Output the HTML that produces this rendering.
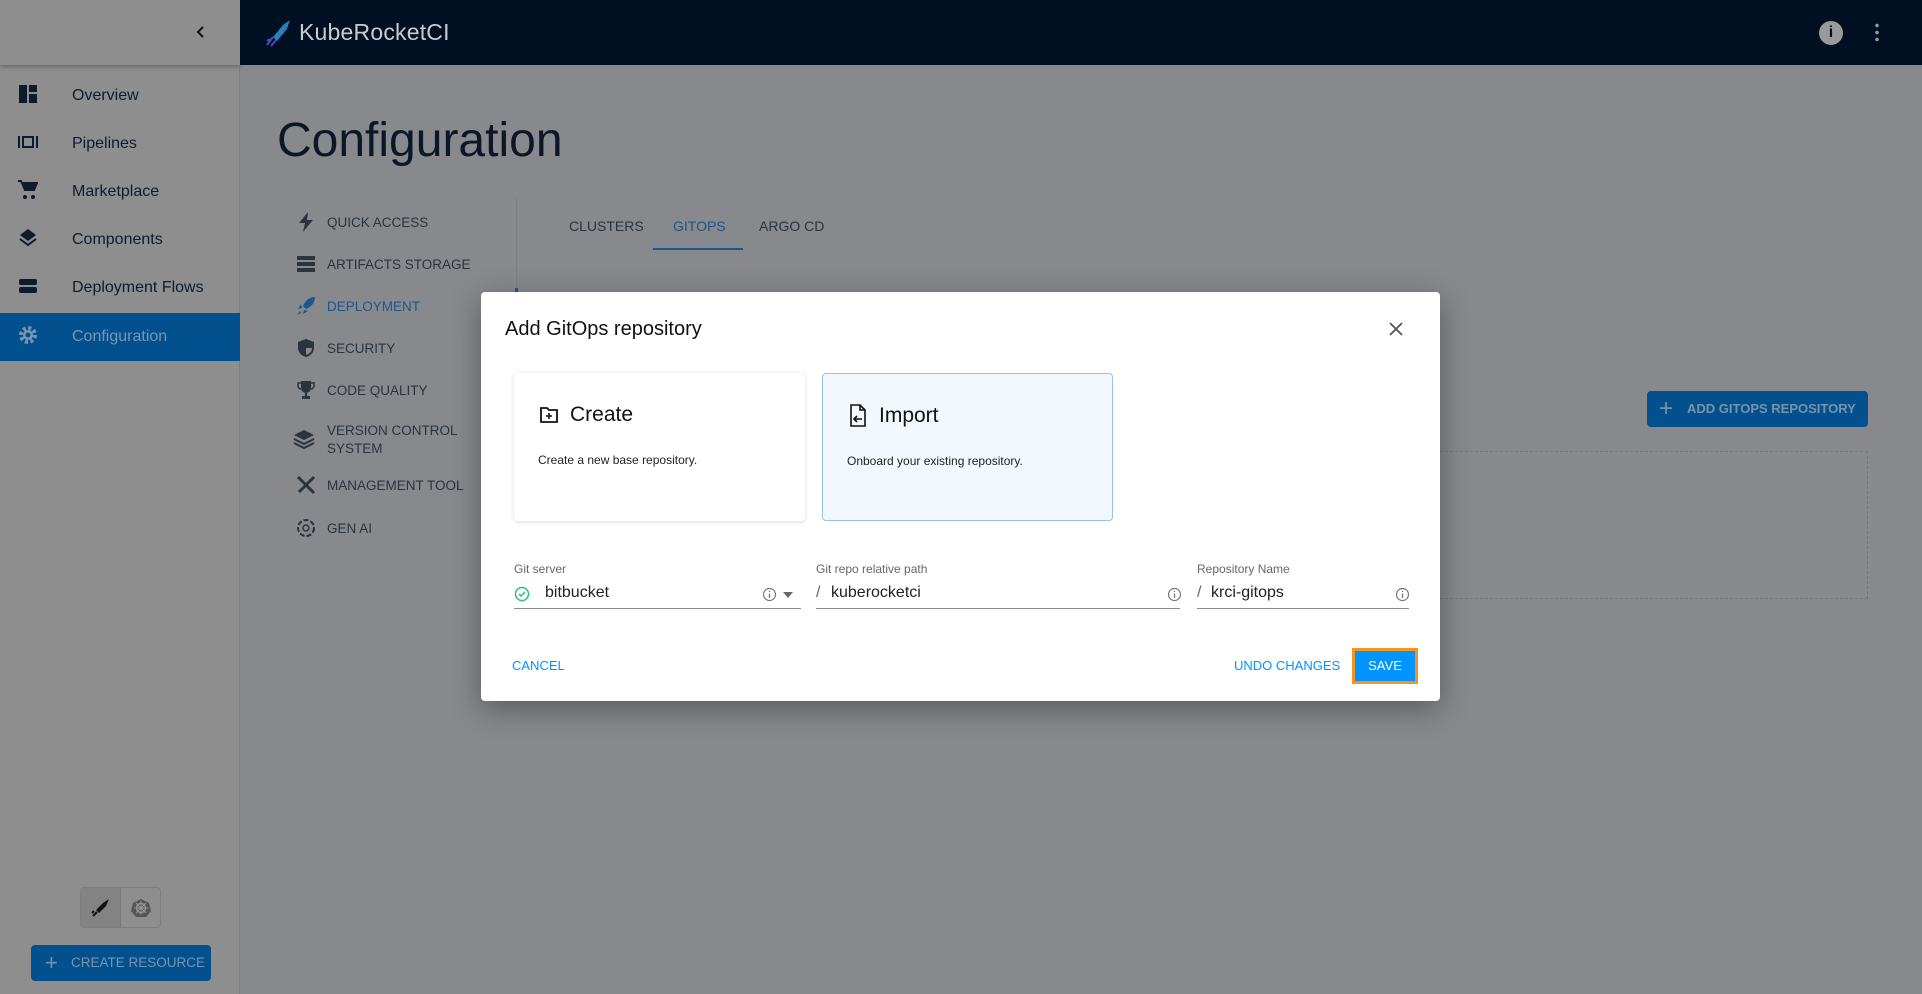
<!DOCTYPE html>
<html><head><meta charset="utf-8"><style>
*{box-sizing:border-box;margin:0;padding:0}
body{width:1922px;height:994px;overflow:hidden;background:#88898d;font-family:"Liberation Sans",sans-serif;position:relative}
.a{position:absolute;white-space:nowrap}
.side{left:0;top:0;width:240px;height:994px;background:#8e8e8e;border-right:1px solid #7d7e81}
.shead{left:0;top:0;width:240px;height:65px;background:#8e8e8e;box-shadow:0 2px 4px rgba(0,0,0,.25)}
.hdr{left:240px;top:0;width:1682px;height:65px;background:#000f22}
.nav{left:0;width:240px;height:48px;font-size:16px;color:#0f1b2b}
.nav span{position:absolute;left:72px;top:15px}
.nav svg{position:absolute;left:18px;top:12px}
.sel{background:#03508e;color:#7a95b3}
.sub{left:296px;font-size:13.5px;color:#2b333d;text-transform:uppercase}
.sub span{position:absolute;left:31px;top:1px;white-space:nowrap}
.tab{font-size:14px;color:#2b333d;top:218px}
.modal{left:481px;top:292px;width:959px;height:409px;background:#fff;border-radius:4px;box-shadow:0 8px 30px rgba(0,0,0,.35)}
.card{top:81px;width:291px;height:148px;border-radius:4px;background:#fff;box-shadow:0 1px 4px rgba(0,0,0,.15)}
.card .t{position:absolute;left:56px;top:30px;font-size:21px;color:#111}
.card .d{position:absolute;left:24px;font-size:12px;color:#222}
.lbl{font-size:12px;color:#666;top:270px}
.val{font-size:16px;color:#222;top:292px}
.ul{height:1px;background:#8c8c8c;top:316px}
.btn{color:#0094ff;font-size:13px;top:366px}
</style></head><body>
<div class="a side"></div>
<div class="a shead"><svg class="a" style="left:194px;top:25px" width="14" height="14" viewBox="0 0 14 14"><path d="M9 2L4 7l5 5" stroke="#111" stroke-width="2" fill="none"/></svg></div>
<div class="a hdr">
<svg class="a" style="left:24px;top:18px" width="30" height="30" viewBox="0 0 30 30"><path d="M26 2l-3 9-10 12-4-4L19 7z" fill="#2a7fb8"/><path d="M9 19l-6 8M12 22l-5 6M6 21l-3 2" stroke="#4a4ab8" stroke-width="2"/></svg>
<div class="a" style="left:59px;top:19px;font-size:23px;color:#c8cbd0;letter-spacing:.2px">KubeRocketCI</div>
<div class="a" style="left:1579px;top:21px;width:24px;height:24px;border-radius:50%;background:#9a9a9a;color:#000f22;font-weight:bold;font-size:16px;text-align:center;line-height:24px">i</div>
<div class="a" style="left:1635px;top:22px;width:4px;height:20px;background:radial-gradient(circle,#999 1.6px,transparent 2px) 0 0/4px 7px"></div>
</div>
<div class="a nav" style="top:72px"><svg width="20" height="20" viewBox="0 0 20 20"><path d="M1 1h8v18H1zM11 1h8v7h-8zM11 10h8v9h-8z" fill="#0f1b2b"/></svg><span>Overview</span></div>
<div class="a nav" style="top:120px"><svg width="20" height="20" viewBox="0 0 20 20"><path d="M0 4h2v12H0zM18 4h2v12h-2zM4 4h12v12H4z" fill="#0f1b2b"/><path d="M6 6h8v8H6z" fill="#8e8e8e"/></svg><span>Pipelines</span></div>
<div class="a nav" style="top:168px"><svg width="20" height="20" viewBox="0 0 20 20"><path d="M0 1h3l4 9h9l3-7H5" stroke="#0f1b2b" stroke-width="2" fill="none"/><path d="M5 4h14l-3 7H7z" fill="#0f1b2b"/><circle cx="7" cy="17" r="2" fill="#0f1b2b"/><circle cx="15" cy="17" r="2" fill="#0f1b2b"/></svg><span>Marketplace</span></div>
<div class="a nav" style="top:216px"><svg width="20" height="20" viewBox="0 0 20 20"><path d="M10 1l8 6-8 6-8-6z" fill="#0f1b2b"/><path d="M2 11l8 6 8-6" stroke="#0f1b2b" stroke-width="2" fill="none"/></svg><span>Components</span></div>
<div class="a nav" style="top:264px"><svg width="20" height="20" viewBox="0 0 20 20"><rect x="1" y="3" width="18" height="6" rx="2" fill="#0f1b2b"/><rect x="1" y="11" width="18" height="6" rx="2" fill="#0f1b2b"/></svg><span>Deployment Flows</span></div>
<div class="a nav sel" style="top:313px"><svg width="20" height="20" viewBox="0 0 20 20"><circle cx="10" cy="10" r="7" fill="none" stroke="#7a95b3" stroke-width="4" stroke-dasharray="3 2.5"/><circle cx="10" cy="10" r="5" fill="#7a95b3"/><circle cx="10" cy="10" r="2.5" fill="#03508e"/></svg><span>Configuration</span></div>
<div class="a" style="left:80px;top:887px;width:81px;height:41px;border:1px solid #7e7e7e;border-radius:4px;overflow:hidden"><div class="a" style="left:0;top:0;width:40px;height:41px;background:#838383;border-right:1px solid #7a7a7a"></div>
<svg class="a" style="left:10px;top:10px" width="20" height="20" viewBox="0 0 20 20"><path d="M18 1l-3 7-7 7-3-3 7-7z" fill="#111"/><path d="M6 14l-4 4M3 13l-2 2" stroke="#111" stroke-width="2"/></svg>
<svg class="a" style="left:50px;top:10px" width="20" height="20" viewBox="0 0 20 20"><path d="M10 1l8 4 2 8-5 6H5l-5-6 2-8z" fill="#555"/><circle cx="10" cy="10" r="4.5" fill="none" stroke="#999" stroke-width="1.3"/><path d="M10 3v14M3 10h14M5 5l10 10M15 5L5 15" stroke="#999" stroke-width=".9"/></svg></div>
<div class="a" style="left:31px;top:945px;width:180px;height:36px;background:#03508e;border-radius:4px;color:#7a93ac;font-size:13.5px;line-height:36px"><span style="position:absolute;left:14px;font-size:22px">+</span><span style="position:absolute;left:40px">CREATE RESOURCE</span></div>

<div class="a" style="left:277px;top:113px;font-size:48px;color:#0b1626">Configuration</div>
<div class="a" style="left:516px;top:198px;width:1px;height:300px;background:#7e7f83"></div>
<div class="a" style="left:515px;top:288px;width:3px;height:20px;background:#1e5a96"></div>
<div class="a sub" style="top:214px"><svg class="a" width="20" height="20" style="left:0;top:-2px" viewBox="0 0 20 20"><path d="M12 0L3 11h6l-2 9 10-12h-6z" fill="#2b333d"/></svg><span>Quick Access</span></div>
<div class="a sub" style="top:256px"><svg class="a" width="20" height="20" style="left:0;top:-2px" viewBox="0 0 20 20"><path d="M1 2h18v4H1zM1 8h18v4H1zM1 14h18v4H1z" fill="#2b333d"/></svg><span>Artifacts Storage</span></div>
<div class="a sub" style="top:298px;color:#1c5590"><svg class="a" width="20" height="20" style="left:0;top:-2px" viewBox="0 0 20 20"><path d="M19 1c-6 0-10 4-12 9l3 3c5-2 9-6 9-12zM6 12l-4 1 3-5zM8 14l-1 4 5-3zM4 15l-3 4 4-2z" fill="#1c5590"/></svg><span>Deployment</span></div>
<div class="a sub" style="top:340px"><svg class="a" width="20" height="20" style="left:0;top:-2px" viewBox="0 0 20 20"><path d="M10 1l8 3v6c0 5-4 8-8 9-4-1-8-4-8-9V4z" fill="#2b333d"/><path d="M10 3v7h6c0 4-3 6-6 7z" fill="#88898d"/></svg><span>Security</span></div>
<div class="a sub" style="top:382px"><svg class="a" width="20" height="20" style="left:0;top:-2px" viewBox="0 0 20 20"><path d="M5 1h10v7a5 5 0 01-10 0zM9 13h2v3h3v3H6v-3h3z" fill="#2b333d"/><path d="M5 3H2v3c0 2 2 3 3 3M15 3h3v3c0 2-2 3-3 3" stroke="#2b333d" stroke-width="1.5" fill="none"/></svg><span>Code Quality</span></div>
<div class="a sub" style="top:421px;line-height:18px"><svg class="a" width="24" height="24" style="left:-4px;top:6px" viewBox="0 0 24 24"><path d="M12 3l10 5-10 5L2 8z" fill="#2b333d"/><path d="M2 12l10 5 10-5M2 16l10 5 10-5" stroke="#2b333d" stroke-width="2" fill="none"/></svg><span>Version Control<br>System</span></div>
<div class="a sub" style="top:477px"><svg class="a" width="20" height="20" style="left:0;top:-2px" viewBox="0 0 20 20"><path d="M2 2l16 16M18 2L6 14M3 17l3-3" stroke="#2b333d" stroke-width="3"/></svg><span>Management Tool</span></div>
<div class="a sub" style="top:520px"><svg class="a" width="22" height="22" style="left:-1px;top:-3px" viewBox="0 0 22 22"><circle cx="11" cy="11" r="8" fill="none" stroke="#2b333d" stroke-width="2" stroke-dasharray="5 2"/><circle cx="11" cy="11" r="3" fill="none" stroke="#2b333d" stroke-width="1.5"/></svg><span>Gen AI</span></div>
<div class="a tab" style="left:569px">CLUSTERS</div>
<div class="a tab" style="left:673px;color:#1c5590">GITOPS</div>
<div class="a tab" style="left:759px">ARGO CD</div>
<div class="a" style="left:653px;top:248px;width:90px;height:2px;background:#1c5590"></div>
<div class="a" style="left:1647px;top:391px;width:221px;height:36px;background:#03508e;border-radius:4px;color:#7a93ac;font-size:13px;line-height:36px;font-weight:bold"><span style="position:absolute;left:12px;font-size:24px;font-weight:normal">+</span><span style="position:absolute;left:40px">ADD GITOPS REPOSITORY</span></div>
<div class="a" style="left:1420px;top:451px;width:448px;height:148px;border:1px dashed #76777b;border-left:none"></div>

<div class="a modal">
<div class="a" style="left:24px;top:26px;font-size:20px;color:#111">Add GitOps repository</div>
<svg class="a" style="left:907px;top:29px" width="16" height="16" viewBox="0 0 16 16"><path d="M2 2l12 12M14 2L2 14" stroke="#555" stroke-width="1.8"/></svg>
<div class="a card" style="left:33px"><svg class="a" style="left:25px;top:32px" width="20" height="20" viewBox="0 0 20 20"><path d="M2 3h6l2 2h8v12H2z" fill="none" stroke="#111" stroke-width="1.8"/><path d="M10 8v6M7 11h6" stroke="#111" stroke-width="1.6"/></svg><div class="t">Create</div><div class="d" style="top:80px">Create a new base repository.</div></div>
<div class="a card" style="left:341px;background:#f3f8fe;border:1px solid #90c4f0;box-shadow:none"><svg class="a" style="left:25px;top:30px" width="20" height="24" viewBox="0 0 20 24"><path d="M3 1h9l5 5v16H3z" fill="none" stroke="#111" stroke-width="1.6"/><path d="M12 1v5h5M14 15H6M9 12l-3 3 3 3" stroke="#111" stroke-width="1.6" fill="none"/></svg><div class="t">Import</div><div class="d" style="top:80px">Onboard your existing repository.</div></div>
<div class="a lbl" style="left:33px">Git server</div>
<svg class="a" style="left:33px;top:294px" width="16" height="16" viewBox="0 0 16 16"><circle cx="8" cy="8" r="6.5" fill="none" stroke="#2fbf71" stroke-width="1.5"/><path d="M5 8l2 2 4-4" stroke="#2fbf71" stroke-width="1.5" fill="none"/></svg>
<div class="a val" style="left:64px">bitbucket</div>
<svg class="a" style="left:281px;top:295px" width="15" height="15" viewBox="0 0 15 15"><circle cx="7.5" cy="7.5" r="6" fill="none" stroke="#777" stroke-width="1.2"/><path d="M7.5 6.5v4.5M7.5 4v1" stroke="#777" stroke-width="1.3"/></svg>
<svg class="a" style="left:301px;top:299px" width="12" height="8" viewBox="0 0 12 8"><path d="M1 1h10L6 7z" fill="#666"/></svg>
<div class="a ul" style="left:33px;width:287px"></div>
<div class="a lbl" style="left:335px">Git repo relative path</div>
<div class="a val" style="left:335px;color:#666">/</div><div class="a val" style="left:350px">kuberocketci</div>
<svg class="a" style="left:686px;top:295px" width="15" height="15" viewBox="0 0 15 15"><circle cx="7.5" cy="7.5" r="6" fill="none" stroke="#777" stroke-width="1.2"/><path d="M7.5 6.5v4.5M7.5 4v1" stroke="#777" stroke-width="1.3"/></svg>
<div class="a ul" style="left:335px;width:364px"></div>
<div class="a lbl" style="left:716px">Repository Name</div>
<div class="a val" style="left:716px;color:#666">/</div><div class="a val" style="left:730px">krci-gitops</div>
<svg class="a" style="left:914px;top:295px" width="15" height="15" viewBox="0 0 15 15"><circle cx="7.5" cy="7.5" r="6" fill="none" stroke="#777" stroke-width="1.2"/><path d="M7.5 6.5v4.5M7.5 4v1" stroke="#777" stroke-width="1.3"/></svg>
<div class="a ul" style="left:716px;width:212px"></div>
<div class="a btn" style="left:31px">CANCEL</div>
<div class="a btn" style="left:753px">UNDO CHANGES</div>
<div class="a" style="left:871px;top:356px;width:66px;height:36px;border:3px solid #f7931e;background:#0094ff;color:#fff;font-size:13px;text-align:center;line-height:30px">SAVE</div>
</div>
</body></html>
